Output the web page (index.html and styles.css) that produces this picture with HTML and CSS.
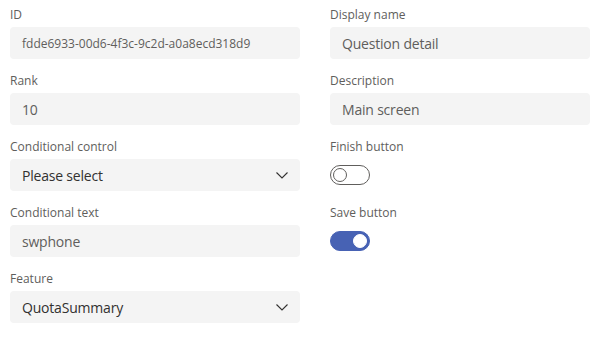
FILE: index.html
```html
<!DOCTYPE html>
<html>
<head>
<meta charset="utf-8">
<link rel="stylesheet" href="styles.css">
</head>
<body>
<div class="form">
  <div class="field">
    <div class="label">ID</div>
    <div class="input small muted">fdde6933-00d6-4f3c-9c2d-a0a8ecd318d9</div>
  </div>
  <div class="field">
    <div class="label">Display name</div>
    <div class="input muted">Question detail</div>
  </div>
  <div class="field">
    <div class="label">Rank</div>
    <div class="input muted">10</div>
  </div>
  <div class="field">
    <div class="label">Description</div>
    <div class="input muted">Main screen</div>
  </div>
  <div class="field">
    <div class="label">Conditional control</div>
    <div class="input select"><span>Please select</span>
      <svg class="chev" width="12" height="7" viewBox="0 0 12 7"><path d="M0.5 0.5 L6 6 L11.5 0.5" fill="none" stroke="#323130" stroke-width="1.1"/></svg>
    </div>
  </div>
  <div class="field">
    <div class="label">Finish button</div>
    <div class="toggle-row"><div class="toggle"><div class="thumb"></div></div></div>
  </div>
  <div class="field">
    <div class="label">Conditional text</div>
    <div class="input muted">swphone</div>
  </div>
  <div class="field">
    <div class="label">Save button</div>
    <div class="toggle-row"><div class="toggle on"><div class="thumb"></div></div></div>
  </div>
  <div class="field">
    <div class="label">Feature</div>
    <div class="input select"><span>QuotaSummary</span>
      <svg class="chev" width="12" height="7" viewBox="0 0 12 7"><path d="M0.5 0.5 L6 6 L11.5 0.5" fill="none" stroke="#323130" stroke-width="1.1"/></svg>
    </div>
  </div>
</div>
</body>
</html>
```
FILE: styles.css
```css
html, body {
  margin: 0;
  padding: 0;
  background: #ffffff;
}
body {
  font-family: "Open Sans", "Noto Sans", sans-serif;
  color: #323130;
}
.form {
  display: grid;
  grid-template-columns: 290px 260px;
  column-gap: 30px;
  row-gap: 13px;
  padding: 6px 10px 0 10px;
}
.field {
  display: flex;
  flex-direction: column;
}
.label {
  font-size: 12px;
  line-height: 18px;
  color: #605e5c;
  margin-bottom: 3px;
}
.input {
  height: 32px;
  box-sizing: border-box;
  background: #f4f4f4;
  border-radius: 4px;
  padding: 0 12px;
  display: flex;
  align-items: center;
  font-size: 14px;
  letter-spacing: -0.2px;
}
.input.small {
  font-size: 12px;
  letter-spacing: 0;
}
.input.muted {
  color: #605e5c;
}
.select {
  justify-content: space-between;
  color: #323130;
}
.chev {
  display: block;
}
.toggle-row {
  height: 32px;
  display: flex;
  align-items: center;
}
.toggle {
  width: 40px;
  height: 20px;
  box-sizing: border-box;
  border: 1px solid #605e5c;
  border-radius: 10px;
  display: flex;
  align-items: center;
  padding: 0 2px;
}
.thumb {
  width: 14px;
  height: 14px;
  box-sizing: border-box;
  border: 1px solid #605e5c;
  border-radius: 50%;
}
.toggle.on {
  background: #4762b4;
  border-color: #4762b4;
  justify-content: flex-end;
}
.toggle.on .thumb {
  background: #ffffff;
  border-color: #ffffff;
}
```
